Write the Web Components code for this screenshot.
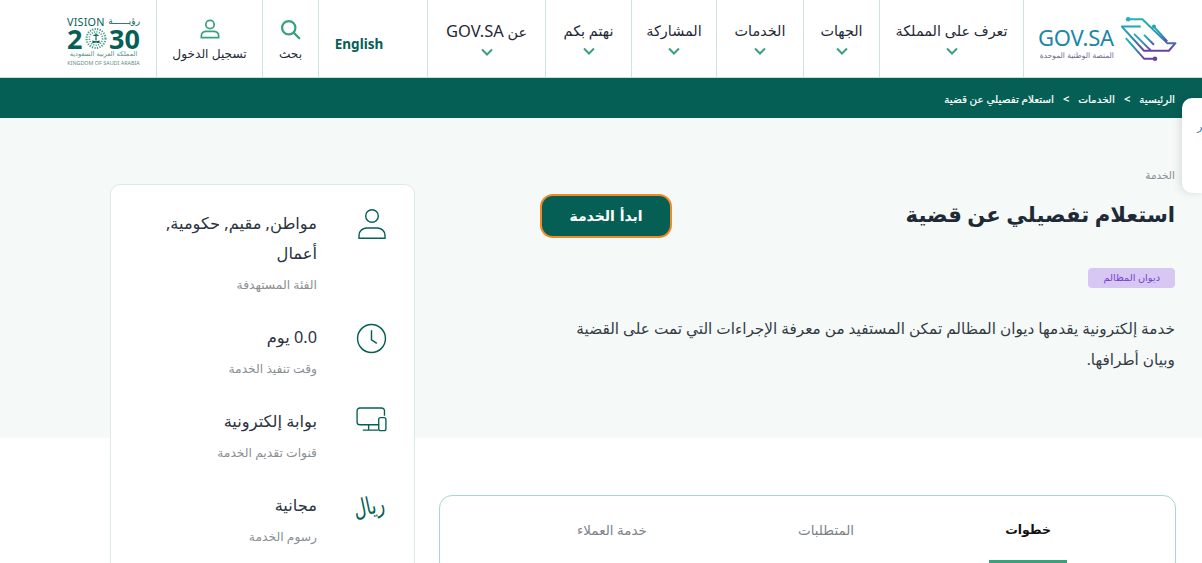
<!DOCTYPE html>
<html lang="ar" dir="rtl">
<head>
<meta charset="utf-8">
<title>استعلام تفصيلي عن قضية</title>
<style>
  html, body { margin: 0; height: 100%; overflow: hidden; background: #fff; }
  body { font-family: "Noto Sans", "DejaVu Sans", sans-serif; color: #1f2a37; }
</style>
</head>
<body>
<gov-header>
  <gov-logo></gov-logo>
  <nav-item width="144">تعرف على المملكة</nav-item>
  <nav-item width="76">الجهات</nav-item>
  <nav-item width="87">الخدمات</nav-item>
  <nav-item width="85">المشاركة</nav-item>
  <nav-item width="86">نهتم بكم</nav-item>
  <nav-item width="118">عن <b>GOV.SA</b></nav-item>
  <nav-lang>English</nav-lang>
  <nav-action width="56" label="بحث">
    <svg width="21" height="21" viewBox="0 0 24 24" fill="none" stroke="#3ba07b" stroke-width="2.600"><circle cx="10" cy="10" r="7.600"/><path d="M15.600 15.600L22 22" stroke-linecap="round"/></svg>
  </nav-action>
  <nav-action width="106" label="تسجيل الدخول">
    <svg width="20" height="20" viewBox="0 0 22 22" fill="none" stroke="#3ba07b" stroke-width="1.900"><circle cx="11" cy="6" r="4.600"/><path d="M1.500 20.500v-2c0-3 2.600-5 5.500-5h8c2.900 0 5.500 2 5.500 5v2z"/></svg>
  </nav-action>
  <vision-logo></vision-logo>
</gov-header>
<bread-crumbs>
  <a>الرئيسية</a>
  <a>الخدمات</a>
  <a>استعلام تفصيلي عن قضية</a>
</bread-crumbs>
<service-page>
  <service-hero slot="hero"
    kicker="الخدمة"
    title="استعلام تفصيلي عن قضية"
    action="ابدأ الخدمة"
    tag="ديوان المظالم"
    text="خدمة إلكترونية يقدمها ديوان المظالم تمكن المستفيد من معرفة الإجراءات التي تمت على القضية وبيان أطرافها."></service-hero>
  <service-tabs slot="hero">
    <tab-item active>خطوات</tab-item>
    <tab-item>المتطلبات</tab-item>
    <tab-item>خدمة العملاء</tab-item>
  </service-tabs>
  <info-card slot="side">
    <info-row value="مواطن, مقيم, حكومية, أعمال" label="الفئة المستهدفة">
      <svg width="28" height="30" viewBox="0 0 28 30" fill="none" stroke="#065f55" stroke-width="1.400"><circle cx="14" cy="7" r="6.300"/><path d="M1 29.300v-2.800c0-5 4-7.500 8-7.500h10c4 0 8 2.500 8 7.500v2.800z"/></svg>
    </info-row>
    <info-row value="0.0 يوم" label="وقت تنفيذ الخدمة">
      <svg width="31" height="31" viewBox="0 0 32 32" fill="none" stroke="#065f55" stroke-width="1.500"><circle cx="16" cy="16" r="14.400"/><path d="M16 7.500v10l5.500 3.500"/></svg>
    </info-row>
    <info-row value="بوابة إلكترونية" label="قنوات تقديم الخدمة">
      <svg width="31" height="25" viewBox="0 0 32 26" fill="none" stroke="#065f55" stroke-width="1.400"><path d="M24 18.500H4a3 3 0 0 1-3-3V4a3 3 0 0 1 3-3h22.500a3 3 0 0 1 3 3v5"/><path d="M13 18.500v5.500M7 24h16"/><rect x="23.500" y="11" width="7.500" height="13.500" rx="2"/></svg>
    </info-row>
    <info-row value="مجانية" label="رسوم الخدمة">
      <span class="riyal">ريال</span>
    </info-row>
  </info-card>
</service-page>
<side-widget>مر</side-widget>

<script>
const BRAND = '#065f55'

class GovHeader extends HTMLElement {
  connectedCallback() {
    this.attachShadow({ mode: 'open' })
    this.shadowRoot.innerHTML = `
      <style>
        :host { display: flex; height: 77px; background: #fff; border-bottom: 1px solid #c5e0d9; }
      </style>
      <slot></slot>`
  }
}

class GovLogo extends HTMLElement {
  connectedCallback() {
    this.attachShadow({ mode: 'open' })
    this.shadowRoot.innerHTML = `
      <style>
        :host { display: flex; direction: ltr; align-items: center; justify-content: center; gap: 5px; width: 179px; padding-right: 9px; box-sizing: border-box; border-left: 1px solid #cfe3de; flex: none; }
        .txt { display: flex; flex-direction: column; align-items: flex-end; margin-top: 12px; }
        .name { font: 400 22px/22px "Noto Sans", sans-serif; color: #1b87a6; letter-spacing: -.2px; }
        .sub { font: 7.500px/15px "DejaVu Sans", sans-serif; color: #6f6590; direction: rtl; white-space: nowrap; }
        svg { flex: none; }
      </style>
      <div class="txt"><span class="name">GOV.SA</span><span class="sub">المنصة الوطنية الموحدة</span></div>
      <svg width="60" height="48" viewBox="955 40 180 145" fill="none" stroke-width="6" stroke-linejoin="round">
        <defs><linearGradient id="g" x1="0" y1="0" x2="0" y2="1"><stop offset="0" stop-color="#20b3b8"/><stop offset=".55" stop-color="#2b8fb0"/><stop offset="1" stop-color="#6d3fa6"/></linearGradient></defs>
        <g stroke="url(#g)">
          <path d="M982 53h43l75 72h25l-20 23h-75l-67-73h57"/>
          <path d="M1060 75l40 45"/>
          <path d="M1000 97l50 50"/>
          <path d="M1030 100l30 30"/>
          <path d="M975 110l55 62h33"/>
        </g>
        <circle cx="982" cy="53" r="7" fill="#20b3b8"/>
        <circle cx="1060" cy="75" r="6" fill="#2aa3b4"/>
        <circle cx="1063" cy="172" r="7" fill="#6d3fa6"/>
      </svg>`
  }
}

class NavItem extends HTMLElement {
  connectedCallback() {
    this.attachShadow({ mode: 'open' })
    this.shadowRoot.innerHTML = `
      <style>
        :host { display: flex; flex-direction: column; align-items: center; flex: none; box-sizing: border-box; border-left: 1px solid #cfe3de; padding-top: 19px; width: ${this.getAttribute('width')}px; }
        span { font-size: 14.400px; line-height: 24px; color: #1f2a37; white-space: nowrap; }
        ::slotted(b) { font-weight: 400; font-size: 16.500px; }
        svg { margin-top: 4px; }
      </style>
      <span><slot></slot></span>
      <svg width="12" height="8" viewBox="0 0 12 8" fill="none" stroke="#3ba07b" stroke-width="2"><path d="M1 1.500l5 5 5-5"/></svg>`
  }
}

class NavLang extends HTMLElement {
  connectedCallback() {
    this.attachShadow({ mode: 'open' })
    this.shadowRoot.innerHTML = `
      <style>
        :host { display: flex; align-items: center; justify-content: center; flex: none; box-sizing: border-box; width: 109px; padding-right: 28px; padding-top: 11px; border-left: 1px solid #cfe3de; font: 700 13.500px "Noto Sans", sans-serif; color: ${BRAND}; }
      </style>
      <slot></slot>`
  }
}

class NavAction extends HTMLElement {
  connectedCallback() {
    this.attachShadow({ mode: 'open' })
    this.shadowRoot.innerHTML = `
      <style>
        :host { display: flex; flex-direction: column; align-items: center; flex: none; box-sizing: border-box; border-left: 1px solid #cfe3de; padding-top: 17px; width: ${this.getAttribute('width')}px; }
        span { font-size: 12.200px; line-height: 18px; margin-top: 4px; white-space: nowrap; }
        .ic { height: 24px; display: flex; align-items: center; }
      </style>
      <div class="ic"><slot></slot></div>
      <span>${this.getAttribute('label')}</span>`
  }
}

class VisionLogo extends HTMLElement {
  connectedCallback() {
    this.attachShadow({ mode: 'open' })
    this.shadowRoot.innerHTML = `
      <style>
        :host { display: flex; flex-direction: column; direction: ltr; flex: none; width: 73px; margin-right: 16px; padding-top: 15px; color: ${BRAND}; }
        .top { display: flex; justify-content: space-between; font: 400 10.800px/13px "Noto Sans", sans-serif; letter-spacing: .2px; white-space: nowrap; }
        .top b { font: 400 9px/13px "DejaVu Sans", sans-serif; direction: rtl; }
        .num { display: flex; align-items: center; justify-content: space-between; font: 700 27px/21px "Noto Sans", sans-serif; }
        .num svg { flex: none; }
        .ar { font: 6.600px/9px "DejaVu Sans", sans-serif; direction: rtl; text-align: center; color: #5b8f86; white-space: nowrap; margin-top: 1px; }
        .en { font: 400 5.400px/8px "Noto Sans", sans-serif; color: #5b8f86; white-space: nowrap; text-align: center; }
      </style>
      <div class="top"><span>VISION</span><b>رؤيــــــة</b></div>
      <div class="num"><span>2</span>
        <svg width="24" height="21" viewBox="0 0 20 20" fill="none" stroke="#4b9c8b">
          <circle cx="10" cy="10" r="9" stroke-width="2" stroke-dasharray="1.200 1.200"/>
          <circle cx="10" cy="10" r="6.300" stroke-width="1.600" stroke-dasharray="1 1.300"/>
          <path d="M10 5v7M7.500 7.500q2.500-2 5 0M6.500 14l7-1.500M13.500 14l-7-1.500" stroke="${BRAND}" stroke-width="1.100"/>
        </svg>
        <span>30</span></div>
      <div class="ar">المملكة العربية السعودية</div>
      <div class="en">KINGDOM OF SAUDI ARABIA</div>`
  }
}

class BreadCrumbs extends HTMLElement {
  connectedCallback() {
    this.attachShadow({ mode: 'open' })
    this.shadowRoot.innerHTML = `
      <style>
        :host { display: flex; align-items: center; box-sizing: border-box; height: 40px; padding: 1px 27px 0 0; gap: 9px; background: ${BRAND}; color: #fff; font-size: 10.400px; -webkit-text-stroke: .2px #fff; }
        ::slotted(a) { display: flex; align-items: center; gap: 9px; }
        ::slotted(a:not(:last-child))::after { content: ">"; font: 400 11px "Noto Sans", sans-serif; }
      </style>
      <slot></slot>`
  }
}

class ServicePage extends HTMLElement {
  connectedCallback() {
    this.attachShadow({ mode: 'open' })
    this.shadowRoot.innerHTML = `
      <style>
        :host { display: grid; grid-template-columns: 737px 305px; column-gap: 24px; padding: 0 26px 0 110px; height: 445px; background: linear-gradient(#f5f9f8 320px, #fff 320px); }
        .side { padding-top: 66px; }
      </style>
      <div><slot name="hero"></slot></div>
      <div class="side"><slot name="side"></slot></div>`
  }
}

class ServiceHero extends HTMLElement {
  connectedCallback() {
    const a = n => this.getAttribute(n)
    this.attachShadow({ mode: 'open' })
    this.shadowRoot.innerHTML = `
      <style>
        :host { display: block; height: 377px; padding: 49px 1px 0 0; box-sizing: border-box; }
        .kicker { font-size: 10.500px; line-height: 16px; color: #8a8f94; }
        .head { display: flex; justify-content: space-between; align-items: flex-start; padding-left: 101px; margin-top: 11px; }
        h1 { margin: 3px 0 0; font-size: 21.200px; line-height: 34px; font-weight: 600; color: #1f2a37; }
        button { width: 132px; height: 44px; background: ${BRAND}; border: 2px solid #f08a24; border-radius: 13px; color: #fff; font: 700 14px "DejaVu Sans", sans-serif; padding: 0; }
        .tag { display: inline-block; margin-top: 30px; height: 20px; line-height: 20px; padding: 0 15px; background: #d6c8f2; border-radius: 4px; font-size: 9.800px; color: #7a3fd0; }
        p { margin: 25px 0 0; width: 604px; font-size: 15.300px; line-height: 31px; color: #333c45; }
      </style>
      <div class="kicker">${a('kicker')}</div>
      <div class="head"><h1>${a('title')}</h1><button>${a('action')}</button></div>
      <span class="tag">${a('tag')}</span>
      <p>${a('text')}</p>`
  }
}

class ServiceTabs extends HTMLElement {
  connectedCallback() {
    this.attachShadow({ mode: 'open' })
    this.shadowRoot.innerHTML = `
      <style>
        :host { display: flex; gap: 119px; padding-right: 108px; height: 80px; box-sizing: border-box; border: 1px solid #a8d8c8; border-radius: 13px; }
      </style>
      <slot></slot>`
  }
}

class TabItem extends HTMLElement {
  connectedCallback() {
    this.attachShadow({ mode: 'open' })
    this.shadowRoot.innerHTML = `
      <style>
        :host { display: block; box-sizing: border-box; height: 67px; padding: 22px 16px 0; font-size: 13.500px; line-height: 24px; color: #7d8388; border-bottom: 3px solid transparent; }
        :host([active]) { color: #111; font-size: 12.500px; font-weight: 700; border-bottom-color: #3ba07b; }
      </style>
      <slot></slot>`
  }
}

class InfoCard extends HTMLElement {
  connectedCallback() {
    this.attachShadow({ mode: 'open' })
    this.shadowRoot.innerHTML = `
      <style>
        :host { display: flex; flex-direction: column; gap: 27px; box-sizing: border-box; height: 420px; padding-top: 23px; background: #fff; border: 1px solid #dcebe7; border-radius: 10px; }
      </style>
      <slot></slot>`
  }
}

class InfoRow extends HTMLElement {
  connectedCallback() {
    this.attachShadow({ mode: 'open' })
    this.shadowRoot.innerHTML = `
      <style>
        :host { display: grid; grid-template-columns: 97px 1fr; }
        .ic { display: flex; justify-content: center; padding: 1px 0 0 12px; color: ${BRAND}; }
        ::slotted(.riyal) { display: inline-block; font: 24px/30px "DejaVu Sans", sans-serif; transform: rotate(-12deg) scaleX(.72); }
        .val { font-size: 16.300px; line-height: 30px; color: #2b3440; width: 170px; }
        .lab { font-size: 12.300px; line-height: 20px; margin-top: 7px; color: #8a8f94; }
        .body { display: flex; flex-direction: column; }
      </style>
      <div class="ic"><slot></slot></div>
      <div class="body"><div class="val">${this.getAttribute('value')}</div><div class="lab">${this.getAttribute('label')}</div></div>`
  }
}

class SideWidget extends HTMLElement {
  connectedCallback() {
    this.attachShadow({ mode: 'open' })
    this.shadowRoot.innerHTML = `
      <style>
        :host { position: absolute; top: 98px; left: 1182px; width: 20px; height: 95px; box-sizing: border-box; padding: 18px 0 0 15px; overflow: hidden; white-space: nowrap; direction: ltr; background: #fff; border-radius: 10px 0 0 10px; box-shadow: -2px 0 8px rgba(0,0,0,.12); font-size: 11px; line-height: 20px; color: #4a86b8; }
      </style>
      <slot></slot>`
  }
}

customElements.define('gov-header', GovHeader)
customElements.define('gov-logo', GovLogo)
customElements.define('nav-item', NavItem)
customElements.define('nav-lang', NavLang)
customElements.define('nav-action', NavAction)
customElements.define('vision-logo', VisionLogo)
customElements.define('bread-crumbs', BreadCrumbs)
customElements.define('service-page', ServicePage)
customElements.define('service-hero', ServiceHero)
customElements.define('service-tabs', ServiceTabs)
customElements.define('tab-item', TabItem)
customElements.define('info-card', InfoCard)
customElements.define('info-row', InfoRow)
customElements.define('side-widget', SideWidget)
</script>
</body>
</html>
